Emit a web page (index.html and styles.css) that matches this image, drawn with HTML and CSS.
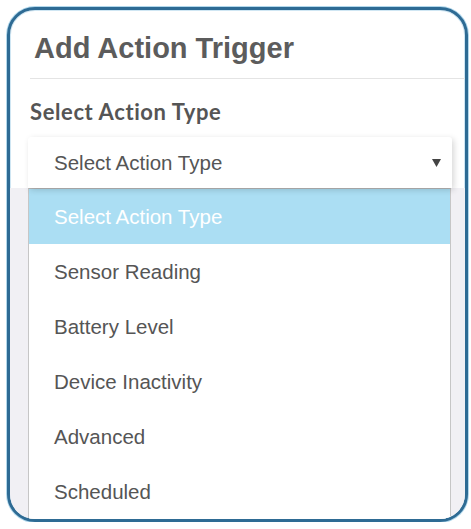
FILE: index.html
```html
<!DOCTYPE html>
<html lang="en">
<head>
    <meta charset="UTF-8">
    <meta name="viewport" content="width=device-width, initial-scale=1.0">
    <title>Add Action Trigger</title>
    <link rel="stylesheet" href="styles.css">
</head>
<body>
    <div class="frame">
        <div class="modal-top">
            <h1 class="modal-title">Add Action Trigger</h1>
            <div class="divider"></div>
            <label class="field-label">Select Action Type</label>
            <div class="select-box">
                <span class="select-value">Select Action Type</span>
                <svg class="select-arrow" width="9" height="8" viewBox="0 0 9 8">
                    <path d="M0 0 H9 L4.5 8 Z" fill="#444"/>
                </svg>
            </div>
        </div>

        <div class="backdrop">
            <ul class="options">
                <li class="option selected">Select Action Type</li>
                <li class="option">Sensor Reading</li>
                <li class="option">Battery Level</li>
                <li class="option">Device Inactivity</li>
                <li class="option">Advanced</li>
                <li class="option">Scheduled</li>
            </ul>
        </div>
    </div>
</body>
</html>
```

FILE: styles.css
```css
* {
    margin: 0;
    padding: 0;
    box-sizing: border-box;
}

body {
    margin: 0;
    background: #fff;
    font-family: 'Liberation Sans', Arial, sans-serif;
    color: #555;
}

.frame {
    margin: 7px 0 0 7px;
    width: 461px;
    height: 515px;
    border: 3px solid #2e6b94;
    border-radius: 28px;
    box-shadow: 0 0 0 1px #b2d8ec, inset 0 0 0 1px #cfe6f3;
    overflow: hidden;
    display: flex;
    flex-direction: column;
    background: #fff;
}

.modal-top {
    position: relative;
    z-index: 1;
    padding-top: 21px;
}

.modal-title {
    margin-left: 24px;
    font-size: 29px;
    line-height: 34px;
    font-weight: bold;
    color: #5c5c5c;
}

.divider {
    margin: 13px 0 0 20px;
    height: 1px;
    background: #e4e4e4;
}

.field-label {
    display: block;
    margin: 20px 0 0 20px;
    font-family: Lato, sans-serif;
    font-weight: bold;
    font-size: 22px;
    line-height: 26px;
    letter-spacing: 0.6px;
    color: #555;
}

.select-box {
    margin: 12px 0 0 18px;
    width: 424px;
    height: 51px;
    display: flex;
    align-items: center;
    justify-content: space-between;
    padding: 0 11px 0 26px;
    background: #fff;
    border-radius: 3px 3px 0 0;
    box-shadow: 2px 2px 6px rgba(0, 0, 0, 0.16);
}

.select-value {
    font-size: 20.5px;
    color: #555;
}

.select-arrow {
    display: block;
}

.backdrop {
    flex: 1;
    background: #f1f0f4;
    padding-left: 18px;
}

.options {
    list-style: none;
    width: 423px;
    background: #fff;
    border: 1px solid #c6c6c6;
    border-top: 1px solid #b8b8b8;
}

.option {
    height: 55px;
    line-height: 55px;
    padding-left: 25px;
    font-size: 20.5px;
    color: #555;
}

.option.selected {
    background: #abdef3;
    color: #fff;
}
```
